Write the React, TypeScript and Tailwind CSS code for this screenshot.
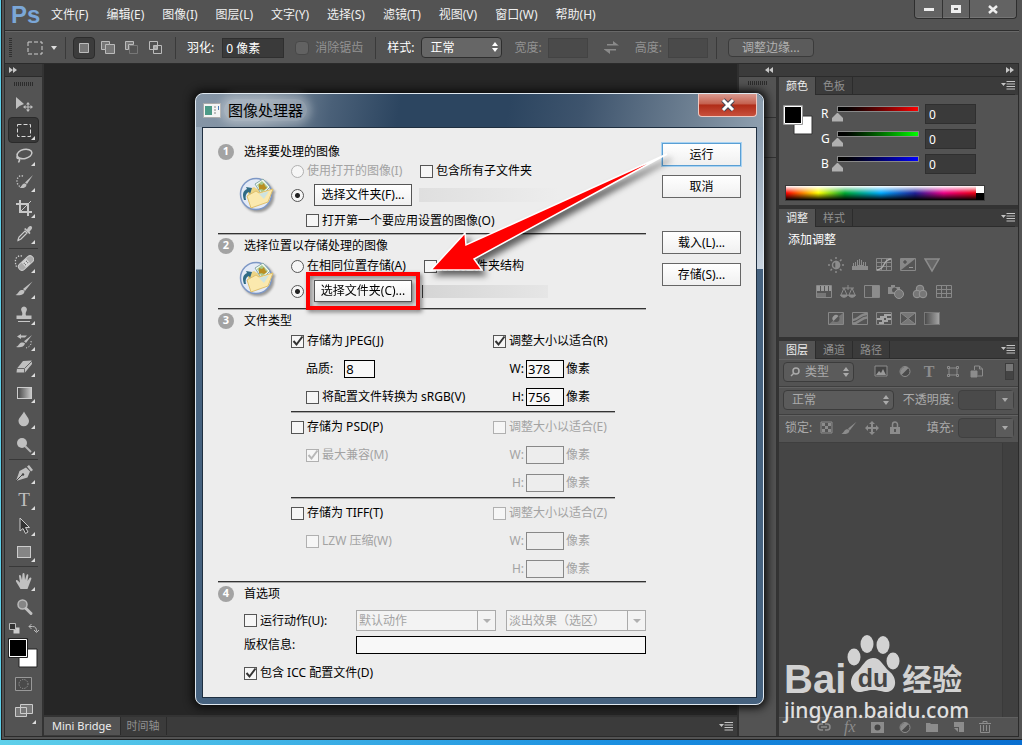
import React from "react";

const cjk = "font-['Noto_Sans','Noto_Sans_CJK_SC',sans-serif]";

const menus = [
  "文件(F)",
  "编辑(E)",
  "图像(I)",
  "图层(L)",
  "文字(Y)",
  "选择(S)",
  "滤镜(T)",
  "视图(V)",
  "窗口(W)",
  "帮助(H)",
];

function UpDown() {
  return (
    <svg width="8" height="12" viewBox="0 0 8 12" fill="currentColor">
      <path d="M4 1 7 5H1zM4 11 1 7h6z" />
    </svg>
  );
}

function DoubleArrow({ left = false }: { left?: boolean }) {
  return (
    <svg width="8" height="6" viewBox="0 0 8 6" fill="#c8c8c8">
      {left ? <path d="M4 0v6L0 3zM8 0v6L4 3z" /> : <path d="M0 0l4 3-4 3zM4 0l4 3-4 3z" />}
    </svg>
  );
}

function PanelMenu() {
  return (
    <button aria-label="面板菜单">
      <svg width="14" height="9" viewBox="0 0 14 9" className="block">
        <path d="M0 2h5L2.500 5z" fill="#c4c4c4" />
        <path d="M5.500.5H14M5.500 3H14M5.500 5.500H14M5.500 8H14" stroke="#c4c4c4" />
      </svg>
    </button>
  );
}

/* ---------- tool box ---------- */

const toolIcons: Record<string, React.ReactNode> = {
  移动: (
    <>
      <path d="M2 3v12l3.500-3L10 10z" />
      <path d="M14 8l2 2.500h-1.500v2h2V11l2.500 2-2.500 2v-1.500h-2v2H16L14 18l-2-2.500h1.500v-2h-2V15L9 13l2.500-2v1.500h2v-2H12z" />
    </>
  ),
  选框: <path d="M3.500 4.500h13v12h-13z" fill="none" stroke="#d8d8d8" strokeDasharray="4 2" />,
  套索: (
    <g fill="none" stroke="#c8c8c8" strokeWidth="1.500">
      <ellipse cx="10.500" cy="8" rx="7.500" ry="4.500" transform="rotate(-12 10.500 8)" />
      <path d="M4 10c-2 1-1 3 1 2.500M5 12.500c1.500 1 0 3-.5 4" />
    </g>
  ),
  快速选择: (
    <>
      <path d="M9 4c-4-1-6 2-6 5s2 6 5 6" fill="none" stroke="#ccc" strokeWidth="1.300" strokeDasharray="1.300 1.500" />
      <path d="M19 3l-6 9-2-1.500z" />
      <path d="M12.500 12.500c0 3-3 4-7 3.500 2-1 2.500-4 4.500-4.500 1 0 2 .3 2.500 1z" />
    </>
  ),
  裁剪: (
    <g fill="none" stroke="#c8c8c8" strokeWidth="2">
      <path d="M6 2v12h12M2 6h12v12" />
      <path d="M7 13 17 3" strokeWidth="1" />
    </g>
  ),
  吸管: (
    <>
      <path d="M4 16l1-3 6-6 2 2-6 6-3 1.500z" fill="#555" stroke="#ccc" strokeWidth="1.200" />
      <path d="M10 5l1.500-1 1.500 1.500C14 3 15.500 1.500 17 2s1.500 2.500 0 4l-1.500 1.500L16.500 9l-1 1.200z" />
    </>
  ),
  修复: (
    <>
      <path d="M8 3C3 2 1 6 1.500 9c0 3 .5 4 1.500 5" fill="none" stroke="#ccc" strokeWidth="1.300" strokeDasharray="1.300 1.500" />
      <g transform="rotate(-42 12 10)">
        <rect x="3" y="6.500" width="18" height="7" rx="3.500" fill="#aaa" stroke="#ccc" />
        <rect x="9" y="7" width="6" height="6" fill="#d8d8d8" />
        <path d="M10 9h1M13 9h1M10 11h1M13 11h1" stroke="#555" />
      </g>
    </>
  ),
  画笔: (
    <>
      <path d="M18.500 2.500 11 12l-2-2z" />
      <path d="M10.500 12c0 4-5 5-9 4 3-1 3-4.500 6-5 1.200-.2 2.500.2 3 1z" />
    </>
  ),
  图章: (
    <>
      <path d="M10 1.500a3 3 0 0 1 2.500 4.500c-1 1.500-1 3-.5 4.500h5.500V14h-15v-3.500H8C8.500 9 8.500 7.500 7.500 6A3 3 0 0 1 10 1.500z" />
      <path d="M4 16.500h12" stroke="#c8c8c8" />
    </>
  ),
  历史: (
    <>
      <path d="M18 4l-6 8-2-1.800zM11 12.500c-1 4-5 4-9 3.500 3-1 3-4 5.500-4.500 1.300-.2 2.800 0 3.500 1z" />
      <path d="M3 5.500 7 3v1.500h6L11 6.500H7V8z" />
      <path d="M17 10c1 4-2 6-5 7" fill="none" stroke="#ccc" strokeDasharray="1.300 1.500" />
    </>
  ),
  橡皮: (
    <>
      <path d="M9 4 17.500 3.500 18 7l-7 8.500H2.500L3 11.500z" />
      <path d="M3 11.500h7.500L18 4M10.500 12v4" stroke="#666" fill="none" />
    </>
  ),
  渐变: <rect x="3.500" y="4.500" width="14" height="11" fill="url(#toolGrad)" stroke="#ccc" />,
  模糊: <path d="M10 2.500c2 4 5 6.500 5 9.500a5 5 0 0 1-10.500 0c0-3 3.500-5.500 5.500-9.500z" />,
  减淡: (
    <>
      <circle cx="8" cy="8" r="5" />
      <path d="M11 11l6 6" stroke="#b4b4b4" strokeWidth="2" />
    </>
  ),
  钢笔: (
    <>
      <path d="M13 4.500 17 8.500l-2.500 6L3 18l3.500-10z" transform="translate(-1 -1)" />
      <path d="M13 2.500 15 1l4 5-2 1.500z" />
      <path d="M2 17l6-6" stroke="#444" />
      <circle cx="9" cy="10.500" r="1.200" fill="#444" />
    </>
  ),
  文字: (
    <text x="10" y="16" textAnchor="middle" fontSize="19" fontFamily="Liberation Serif, serif">
      T
    </text>
  ),
  路径选择: <path d="M6 2v13l3-2.500 2.500 5 2.500-1.500-2.500-4.500h4z" fill="#333" stroke="#ccc" />,
  矩形: <rect x="3.500" y="4.500" width="13" height="11" fill="#858585" stroke="#ccc" />,
  抓手: (
    <path d="M6.500 18 2 10.500c-.5-1.500 1-2 2-.8l2 2L5 5c0-1.500 1.800-1.500 2 0l1 4 .5-6c.2-1.500 2-1.500 2 0l.5 6 1.500-5c.5-1.300 2-1 1.800.5L13.500 10l2-3c1-1.200 2.300-.3 1.800 1L15 14l-1.500 4z" />
  ),
  缩放: (
    <>
      <circle cx="8.500" cy="7.500" r="4.500" fill="#858585" stroke="#bbb" strokeWidth="1.500" />
      <path d="M12 11.500l5 5" stroke="#c0c0c0" strokeWidth="3" strokeLinecap="round" />
    </>
  ),
};

const toolGroups = [
  ["移动", "选框", "套索", "快速选择", "裁剪", "吸管"],
  ["修复", "画笔", "图章", "历史", "橡皮", "渐变", "模糊", "减淡"],
  ["钢笔", "文字", "路径选择", "矩形"],
  ["抓手", "缩放"],
];

function Tool({ name }: { name: string }) {
  const active = name === "选框";
  return (
    <button
      aria-label={name}
      className={`relative flex h-[26px] w-[31px] items-center justify-center rounded-sm border ${
        active ? "border-[#2a2a2a] bg-[#383838]" : "border-transparent"
      }`}
    >
      <svg width="20" height="20" viewBox="0 0 20 20" fill="#c0c0c0">
        {toolIcons[name]}
      </svg>
      {name !== "移动" && name !== "缩放" && (
        <svg width="4" height="4" className="absolute right-[3px] bottom-[2px]" fill="#ddd">
          <path d="M4 0v4H0z" />
        </svg>
      )}
    </button>
  );
}

function Grip() {
  return (
    <svg width="20" height="4">
      <path d="M0 2h20" stroke="#2c2c2c" strokeWidth="4" strokeDasharray="1 1" />
    </svg>
  );
}

function ToolBox() {
  return (
    <aside className="flex w-[39px] shrink-0 flex-col items-center border-r-2 border-[#333] bg-[#535353]">
      <div className="flex h-[13px] w-full items-center border-b border-[#2b2b2b] bg-[#3b3b3b] pl-1">
        <DoubleArrow />
      </div>
      <div className="flex h-[14px] items-center">
        <Grip />
      </div>
      {toolGroups.map((group, i) => (
        <React.Fragment key={i}>
          {i > 0 && <div className="my-px h-px w-[29px] bg-[#383838]" />}
          {group.map((name) => (
            <Tool key={name} name={name} />
          ))}
        </React.Fragment>
      ))}
      <div className="flex h-4 w-[30px] items-center justify-between">
        <svg width="11" height="11">
          <path d="M4.500 4.500h6v6h-6z" fill="#ccc" />
          <path d="M.5.5h6v6h-6z" fill="#333" stroke="#bbb" />
        </svg>
        <svg width="11" height="11" fill="none" stroke="#bbb">
          <path d="M1 3.500h3.500c3 0 4 1.500 4 5M3.500 1 1 3.500 3.500 6M6 7l2.500 2.500L11 7" />
        </svg>
      </div>
      <svg width="31" height="31" className="mt-[2px]">
        <path d="M11 11h18v18H11z" fill="#fff" stroke="#222" />
        <path d="M1.500 1.500h17v17h-17z" stroke="#fff" />
        <path d="M.5.500h19v19H.5z" fill="none" stroke="#222" />
      </svg>
      <button aria-label="快速蒙版" className="mt-[2px] flex h-[26px] items-center">
        <svg width="17" height="14" fill="#4a4a4a" stroke="#999">
          <path d="M.5.500h16v13H.5z" />
          <circle cx="8.500" cy="7" r="4.500" strokeDasharray="1.200 1.200" />
        </svg>
      </button>
      <button aria-label="屏幕模式" className="relative flex h-[28px] w-[31px] items-center justify-center">
        <svg width="18" height="14" fill="#777" stroke="#ccc">
          <path d="M.5 3.500h11v9H.5zM5.500.5h12v9h-12z" />
        </svg>
        <svg width="4" height="4" className="absolute right-[3px] bottom-px" fill="#ddd">
          <path d="M4 0v4H0z" />
        </svg>
      </button>
    </aside>
  );
}

/* ---------- top bars ---------- */

function MenuBar() {
  return (
    <header className="flex h-[31px] items-center border-b border-[#2e2e2e]">
      <span className="w-[46px] pl-[6px] font-['Liberation_Sans'] text-2xl leading-6 font-bold text-[#7ba7d7]">Ps</span>
      <nav className="flex gap-[18px] text-xs text-[#f0f0f0]">
        {menus.map((m) => (
          <button key={m} className="whitespace-nowrap">
            {m}
          </button>
        ))}
      </nav>
      <div className="mr-[2px] ml-auto flex h-[19px] self-start rounded-b border border-t-0 border-[#2e2e2e] bg-[#636363] shadow-[inset_0_-1px_0_#757575]">
        <button aria-label="最小化" className="flex w-7 items-center justify-center border-r border-[#333]">
          <svg width="10" height="3">
            <path d="M0 0h10v3H0z" fill="#eee" />
          </svg>
        </button>
        <button aria-label="最大化" className="flex w-[27px] items-center justify-center border-r border-[#333]">
          <svg width="10" height="8">
            <path d="M1.500 1.500h7v5h-7z" fill="none" stroke="#eee" strokeWidth="3" />
          </svg>
        </button>
        <button aria-label="关闭" className="flex w-[46px] items-center justify-center">
          <svg width="10" height="9">
            <path d="M1 1l8 7M9 1 1 8" stroke="#eee" strokeWidth="2.500" />
          </svg>
        </button>
      </div>
    </header>
  );
}

function Divider() {
  return <div className="h-[22px] w-px bg-[#3a3a3a]" />;
}

function OptionsBar() {
  return (
    <div className="flex h-8 items-center border-t border-[#686868] pl-1 text-xs whitespace-nowrap text-white">
      <svg width="4" height="20">
        <path d="M1.500 0v20" stroke="#303030" strokeWidth="3" strokeDasharray="1 1" />
      </svg>
      <svg width="16" height="14" className="ml-[14px]">
        <path d="M1 1h14v12H1z" fill="none" stroke="#d0d0d0" strokeDasharray="4 2" />
      </svg>
      <svg width="6" height="4" className="mx-2" fill="#ddd">
        <path d="M0 0h6L3 4z" />
      </svg>
      <Divider />
      <div className="ml-[7px] flex items-center gap-[10px]">
        <button aria-label="新选区" className="flex h-[22px] w-[22px] items-center justify-center rounded-sm border border-[#2c2c2c] bg-[#3c3c3c]">
          <svg width="10" height="10">
            <path d="M.5.500h9v9h-9z" fill="#777" stroke="#bbb" />
          </svg>
        </button>
        <button aria-label="添加到选区" className="-ml-1">
          <svg width="14" height="14" stroke="#bbb" fill="#777">
            <path d="M.5.500h8v3h5v9h-9v-4h-4z" />
            <path d="M4.500 8.500v-5h4" fill="none" />
          </svg>
        </button>
        <button aria-label="从选区减去">
          <svg width="14" height="14" stroke="#bbb" fill="none">
            <path d="M4.500 4.500h8v8h-8z" stroke="#777" />
            <path d="M.5.500h8v3h-5v5h-3z" fill="#777" />
          </svg>
        </button>
        <button aria-label="与选区交叉">
          <svg width="14" height="14" stroke="#bbb" fill="none">
            <path d="M.5.500h8v8h-8zM4.500 4.500h8v8h-8z" />
            <path d="M5 5h3v3H5z" fill="#999" />
          </svg>
        </button>
      </div>
      <div className="ml-3">
        <Divider />
      </div>
      <label htmlFor="feather" className="ml-[11px]">
        羽化:
      </label>
      <input id="feather" defaultValue="0 像素" className="ml-2 h-5 w-[62px] border border-[#2f2f2f] bg-[#3a3a3a] px-[3px]" />
      <label className="ml-[11px] flex items-center gap-[6px] text-[#929292]">
        <input type="checkbox" disabled className="h-[14px] w-[14px] appearance-none rounded-sm border border-[#484848] bg-[#626262]" />
        消除锯齿
      </label>
      <div className="mr-[11px] ml-3">
        <Divider />
      </div>
      <label htmlFor="style">样式:</label>
      <span className="relative ml-[7px]">
        <select id="style" className="block h-[21px] w-[81px] appearance-none rounded-sm border border-[#2e2e2e] bg-[#666] pl-2">
          <option>正常</option>
        </select>
        <span className="pointer-events-none absolute top-1 right-[3px]">
          <UpDown />
        </span>
      </span>
      <label htmlFor="width" className="ml-3 text-[#929292]">
        宽度:
      </label>
      <input id="width" disabled className="ml-[6px] h-5 w-10 border border-[#434343] bg-[#4a4a4a]" />
      <svg width="15" height="13" className="mx-4" fill="#8a8a8a">
        <path d="M3 3h6V0l6 4.500H3zM12 9.500H6V13L0 8.500V8h12z" />
      </svg>
      <label htmlFor="height" className="text-[#929292]">
        高度:
      </label>
      <input id="height" disabled className="ml-[6px] h-5 w-10 border border-[#434343] bg-[#4a4a4a]" />
      <div className="mr-[11px] ml-2">
        <Divider />
      </div>
      <button className="h-[19px] w-[86px] rounded-sm border border-[#3b3b3b] bg-[#5b5b5b] leading-4 text-[#b0b0b0]">调整边缘...</button>
    </div>
  );
}

/* ---------- right panels ---------- */

function PanelTabs({ tabs }: { tabs: string[] }) {
  return (
    <div className="flex h-[18px] items-stretch bg-[#3b3b3b] pr-[3px] text-[11px] leading-4">
      {tabs.map((t, i) => (
        <button
          key={t}
          className={`border-r border-[#2c2c2c] px-[7px] whitespace-nowrap ${
            i === 0 ? "bg-[#535353] text-[#eee]" : "border-b text-[#909090]"
          }`}
        >
          {t}
        </button>
      ))}
      <div className="flex flex-1 items-center justify-end border-b border-[#2c2c2c]">
        <PanelMenu />
      </div>
    </div>
  );
}

const channels = [
  { name: "R", bar: "bg-linear-to-r from-black to-[#f00]" },
  { name: "G", bar: "bg-linear-to-r from-black to-[#0f0]" },
  { name: "B", bar: "bg-linear-to-r from-black to-[#00f]" },
];

function ColorPanel() {
  return (
    <section className="border-b-4 border-[#333]">
      <PanelTabs tabs={["颜色", "色板"]} />
      <div className="flex pt-[9px] pl-1">
        <svg width="31" height="31" className="mt-px shrink-0">
          <path d="M11 11h18v18H11z" fill="#fff" stroke="#333" />
          <path d="M1.500 1.500h17v17h-17z" stroke="#fff" />
          <path d="M.5.500h19v19H.5z" fill="none" stroke="#999" />
        </svg>
        <div className="ml-[7px] flex flex-1 flex-col gap-[5px] text-xs text-white">
          {channels.map((c) => (
            <div key={c.name} className="flex h-5 items-center">
              <label htmlFor={`ch-${c.name}`} className="w-[11px] leading-4">
                {c.name}
              </label>
              <div className="flex w-[92px] flex-col">
                <div className={`mx-[5px] h-[6px] border border-[#888] ${c.bar}`} />
                <input
                  id={`ch-${c.name}`}
                  type="range"
                  min={0}
                  max={255}
                  defaultValue={0}
                  className="block h-[10px] w-full appearance-none bg-transparent [&::-webkit-slider-thumb]:h-[9px] [&::-webkit-slider-thumb]:w-[11px] [&::-webkit-slider-thumb]:appearance-none [&::-webkit-slider-thumb]:bg-[#b0b0b0] [&::-webkit-slider-thumb]:[clip-path:polygon(50%_0,100%_60%,100%_100%,0_100%,0_60%)]"
                />
              </div>
              <input aria-label={`${c.name} 值`} defaultValue="0" className="ml-px h-5 w-[51px] border border-[#2f2f2f] bg-[#3a3a3a] px-[3px]" />
            </div>
          ))}
        </div>
      </div>
      <div className="mt-[11px] mb-1 ml-[6px] flex h-4 w-[200px] border border-[#3a3a3a]">
        <div className="flex-1 bg-[linear-gradient(to_bottom,#fff,transparent_50%,#000),linear-gradient(to_right,#f00,#ff0_17%,#0a3_31%,#0af_50%,#229_68%,#e08_83%,#e01)]" />
        <div className="w-2 bg-[linear-gradient(#fff_50%,#000_50%)]" />
      </div>
    </section>
  );
}

const box = <path d="M.5 1.500h15v12H.5z" fill="#555" stroke="#888" />;

const adjustRows: React.ReactNode[][] = [
  [
    <g key="sun" stroke="#8c8c8c" strokeWidth="1.500" fill="none">
      <circle cx="8" cy="8" r="3.500" />
      <path d="M8 4.500a3.500 3.500 0 0 1 0 7z" fill="#8c8c8c" />
      <path d="M8 0v2M8 14v2M0 8h2M14 8h2M2.500 2.500l1.500 1.500M12 12l1.500 1.500M13.500 2.500 12 4M4 12l-1.500 1.500" />
    </g>,
    <path key="levels" d="M0 13V9h1V6h1v3h1V5h1v4h1V3h1v5h1V2h1v6h1V3h1v5h1V5h1v4h1V5h1v4h2v4z" fill="#8c8c8c" />,
    <g key="curves">
      {box}
      <path d="M5.500 2v11M10.500 2v11M1 5.500h14M1 9.500h14" stroke="#888" />
      <path d="M1 13c9-1 5-10 14-11" stroke="#aaa" fill="none" strokeWidth="1.500" />
    </g>,
    <g key="exposure">
      {box}
      <path d="M1 13V2h14z" fill="#888" />
      <path d="M3 5h4M5 3v4" stroke="#444" />
      <path d="M9 10.500h4" stroke="#999" />
    </g>,
    <path key="vibrance" d="M1 2h14L8 14z" fill="#666" stroke="#8c8c8c" strokeWidth="1.500" />,
  ],
  [
    <g key="hue">
      {box}
      <path d="M1 4.500h14" stroke="#999" strokeWidth="5" strokeDasharray="3 1" />
      <path d="M1 9h9v4H1z" fill="#777" />
    </g>,
    <g key="balance" stroke="#8c8c8c" fill="none">
      <path d="M2 4h12M8 1v5M4 4 1 11M4 4l3 7M12 4 9 11M12 4l3 7" />
      <path d="M.5 11h7c-1 3-6 3-7 0zM8.500 11h7c-1 3-6 3-7 0z" fill="#8c8c8c" />
    </g>,
    <g key="bw">
      {box}
      <path d="M8 2h7v11H8z" fill="#8c8c8c" />
    </g>,
    <g key="photo">
      <path d="M0 3h3V1h4v2h5v7H0z" fill="#8c8c8c" />
      <circle cx="6.500" cy="6" r="2.500" fill="#555" />
      <circle cx="11" cy="10" r="4.500" fill="#777" stroke="#999" />
    </g>,
    <g key="mixer" stroke="#999" fill="#777">
      <circle cx="8" cy="5" r="3.800" />
      <circle cx="5" cy="10" r="3.800" />
      <circle cx="11" cy="10" r="3.800" />
    </g>,
    <g key="lookup">
      {box}
      <path d="M5.500 2v11M10.500 2v11M1 5.500h14M1 9.500h14" stroke="#888" />
    </g>,
  ],
  [
    <g key="invert">
      {box}
      <path d="M1 13 15 2v11z" fill="#777" />
      <circle cx="8" cy="7.500" r="3.500" fill="#555" />
      <path d="M5.500 10a3.500 3.500 0 0 1 5-5z" fill="#999" />
    </g>,
    <g key="posterize">
      {box}
      <path d="M1 9C6 9 8 3 15 3M1 12.500c6 0 8-6 14-6" stroke="#888" strokeWidth="2.500" fill="none" />
    </g>,
    <g key="threshold">
      {box}
      <path d="M1 7h3V5h4V3h7v2h-4v2H8v2H1zM3 11h3V9h4V7h5v2h-3v2H8v2H3z" fill="#a5a5a5" />
    </g>,
    <g key="selective">
      {box}
      <path d="M1 2l7 5.500L15 2M1 13l7-5.500 7 5.500" stroke="#888" fill="#777" />
    </g>,
    <rect key="map" x=".5" y="1.500" width="15" height="12" fill="url(#toolGrad)" stroke="#888" opacity=".7" />,
  ],
];

function AdjustPanel() {
  return (
    <section className="border-b-4 border-[#333]">
      <PanelTabs tabs={["调整", "样式"]} />
      <h2 className="pt-[3px] pl-[9px] text-xs leading-5 text-white">添加调整</h2>
      <div className="flex w-[210px] flex-col gap-[11px] pt-[7px] pb-[10px]">
        {adjustRows.map((row, i) => (
          <div key={i} className="flex justify-center gap-2">
            {row.map((icon, j) => (
              <button key={j} aria-label={`调整 ${i + 1}-${j + 1}`}>
                <svg width="16" height="16" viewBox="0 0 16 16" className="block">
                  {icon}
                </svg>
              </button>
            ))}
          </div>
        ))}
      </div>
    </section>
  );
}

function PercentBox({ id }: { id: string }) {
  return (
    <span className="flex h-5 w-14 rounded-sm border border-[#404040] bg-[#4a4a4a]">
      <input id={id} disabled className="w-9" />
      <button aria-label="展开" className="flex flex-1 items-center justify-center border-l border-[#404040] bg-[#5b5b5b]">
        <svg width="6" height="4" fill="#aaa">
          <path d="M0 0h6L3 4z" />
        </svg>
      </button>
    </span>
  );
}

function HalfCircle() {
  return (
    <svg width="14" height="13">
      <circle cx="7" cy="6.500" r="5" fill="#4a4a4a" stroke="#8c8c8c" />
      <path d="M3.500 10A5 5 0 0 1 10.500 3z" fill="#8c8c8c" />
    </svg>
  );
}

function LayerPanel() {
  const row = "flex h-7 items-center border-b border-[#3f3f3f] pr-1 pb-[2px] pl-1 shadow-[inset_0_1px_0_#626262]";
  return (
    <section className="flex flex-1 flex-col text-xs text-[#aaa]">
      <PanelTabs tabs={["图层", "通道", "路径"]} />
      <div className={row}>
        <span className="relative flex items-center">
          <svg width="10" height="10" className="absolute left-[7px]" fill="none" stroke="#aaa" strokeWidth="1.500">
            <circle cx="6" cy="4" r="3" />
            <path d="M4 6 1 9" />
          </svg>
          <select aria-label="筛选" className="h-5 w-[71px] appearance-none rounded-sm border border-[#3c3c3c] bg-[#5b5b5b] pl-[21px]">
            <option>类型</option>
          </select>
          <span className="pointer-events-none absolute right-1">
            <UpDown />
          </span>
        </span>
        <div className="ml-5 flex flex-1 items-center gap-[10px]">
          <svg width="14" height="13">
            <path d="M1 1h12v10H1z" fill="#444" stroke="#8c8c8c" />
            <path d="M2 10l3-4 2 2 2-4 3 6z" fill="#999" />
          </svg>
          <HalfCircle />
          <span className="w-[14px] text-center font-['Liberation_Serif'] text-base leading-4 font-bold text-[#8c8c8c]">T</span>
          <svg width="14" height="13" fill="#555" stroke="#8c8c8c">
            <path d="M3 3h8v7H3zM1.500 1.500h2v2h-2zM10.500 1.500h2v2h-2zM1.500 9.500h2v2h-2zM10.500 9.500h2v2h-2z" />
          </svg>
          <svg width="14" height="13" stroke="#8c8c8c" fill="none">
            <path d="M4.500 5V1h5l3 3v7h-5M9.500 1v3h3" />
            <path d="M1 6h6v6H1z" fill="#8c8c8c" />
          </svg>
        </div>
        <button aria-label="筛选开关" className="flex h-[17px] w-[9px] flex-col border border-[#3c3c3c] bg-[#444]">
          <span className="h-[7px] w-full bg-[#777]" />
        </button>
      </div>
      <div className={row}>
        <span className="relative flex items-center">
          <select aria-label="混合模式" className="h-5 w-[111px] appearance-none rounded-sm border border-[#3c3c3c] bg-[#5b5b5b] pl-2">
            <option>正常</option>
          </select>
          <span className="pointer-events-none absolute right-1">
            <UpDown />
          </span>
        </span>
        <label htmlFor="opacity" className="mr-1 ml-auto">
          不透明度:
        </label>
        <PercentBox id="opacity" />
      </div>
      <div className={row}>
        <span className="ml-[2px]">锁定:</span>
        <div className="ml-2 flex flex-1 items-center gap-2">
          <svg width="13" height="13">
            <path d="M1 1h11v11H1z" fill="#555" stroke="#8c8c8c" />
            <path d="M2 2h3v3H2zM8 2h3v3H8zM5 5h3v3H5zM2 8h3v3H2zM8 8h3v3H8z" fill="#8c8c8c" />
          </svg>
          <svg width="16" height="14" viewBox="1 2 18 15" fill="#8c8c8c">
            {toolIcons["画笔"]}
          </svg>
          <svg width="14" height="14" fill="#8c8c8c">
            <path d="M7 0l3 3H8v3h3V4l3 3-3 3V8H8v3h2l-3 3-3-3h2V8H3v2L0 7l3-3v2h3V3H4z" />
          </svg>
          <svg width="16" height="13" fill="#8c8c8c">
            <path d="M3 6h10v7H3z" />
            <path d="M5.500 6V3.500a2.500 2.500 0 0 1 5 0V6" fill="none" stroke="#8c8c8c" strokeWidth="1.500" />
            <path d="M8 8v3" stroke="#444" strokeWidth="1.500" />
          </svg>
        </div>
        <label htmlFor="fill" className="mr-1">
          填充:
        </label>
        <PercentBox id="fill" />
      </div>
      <div className="flex flex-1 justify-end bg-[#454545]">
        <div className="w-4 border-l border-[#3a3a3a] bg-[#404040]" />
      </div>
      <div className="flex h-[19px] items-center justify-end gap-[13px] border-t border-[#606060] pr-[27px] text-[#8c8c8c]">
        <svg width="14" height="8" fill="none" stroke="currentColor" strokeWidth="1.500">
          <path d="M6 1H4a3 3 0 0 0 0 6h2M8 1h2a3 3 0 0 1 0 6H8M4 4h6" />
        </svg>
        <em className="w-[14px] font-['Liberation_Serif'] text-base leading-4">fx</em>
        <svg width="14" height="11">
          <path d="M0 0h13v11H0z" fill="currentColor" />
          <circle cx="6.500" cy="5.500" r="3" fill="#444" />
        </svg>
        <HalfCircle />
        <svg width="14" height="11" fill="currentColor">
          <path d="M1 1h4l1 1h7v8H1z" />
        </svg>
        <svg width="14" height="11" fill="currentColor">
          <path d="M2 0h10v10H7V5H2z" />
          <path d="M2 6h4v4z" />
        </svg>
        <svg width="12" height="12" fill="none" stroke="currentColor">
          <path d="M0 2.500h12M4 2V.5h4V2M1.500 4v7.500h9V4M4.500 4v6M7.500 4v6" />
        </svg>
      </div>
    </section>
  );
}

/* ---------- image processor dialog ---------- */

interface CheckProps {
  label: string;
  type?: "checkbox" | "radio";
  name?: string;
  checked?: boolean;
  disabled?: boolean;
  className?: string;
}

function Check({ label, type = "checkbox", name, checked, disabled, className = "" }: CheckProps) {
  return (
    <label className={`flex items-center gap-[3px] whitespace-nowrap ${disabled ? "text-[#a3a3a3]" : ""} ${className}`}>
      <span className="relative flex">
        <input
          type={type}
          name={name}
          defaultChecked={checked}
          disabled={disabled}
          aria-label={label || "选择文件夹"}
          className={`peer h-[13px] w-[13px] appearance-none border border-[#555] bg-[#f6f6f6] disabled:border-[#b0b0b0] ${
            type === "radio" ? "rounded-full checked:bg-[radial-gradient(circle,#222_0_2px,#f6f6f6_3px)]" : ""
          }`}
        />
        {type === "checkbox" && (
          <svg
            viewBox="0 0 13 13"
            className="pointer-events-none absolute inset-0 hidden h-[13px] w-[13px] peer-checked:block"
            fill="none"
            stroke={disabled ? "#b8b8b8" : "#333"}
            strokeWidth="2"
          >
            <path d="M2.500 6 5.500 9.500 11.500 1.500" />
          </svg>
        )}
      </span>
      {label}
    </label>
  );
}

function DialogButton({ children, focused }: { children: React.ReactNode; focused?: boolean }) {
  return (
    <button
      className={`h-[23px] border bg-linear-to-b from-white to-[#f0f0f0] leading-5 ${
        focused ? "border-[#5a9fd4] ring-1 ring-[#a9d3f2]" : "border-[#666]"
      }`}
    >
      {children}
    </button>
  );
}

function StepTitle({ n, children }: { n: number; children: React.ReactNode }) {
  return (
    <h3 className="flex h-[21px] items-center gap-[10px]">
      <span className="flex h-4 w-4 items-center justify-center rounded-full bg-[#a3a3a3] font-['Open_Sans'] text-[11px] font-bold text-white">
        {n}
      </span>
      {children}
    </h3>
  );
}

function FolderIcon() {
  return (
    <svg width="38" height="36" viewBox="0 0 38 36" className="mr-[14px] mb-2 ml-[21px] self-center drop-shadow-[2px_2px_1px_#999]">
      <circle cx="17" cy="18" r="15.500" fill="#e3eaf6" stroke="#7d97c5" strokeWidth="1.500" />
      <path d="M8 14l7-3 3 2 10-3 2 11-18 7z" fill="#ecd486" />
      <path d="M16 8 24 3l7 8-8 8z" fill="#f4f8f0" stroke="#8aa" />
      <path d="M18 9l5-4 6 6-6 6z" fill="#a9c98c" />
      <path d="M20 8l3 1 2-2 1 3 2 2-3 2-3-1-2 1v-3z" fill="#b98e22" />
      <path d="M8 20l9-5 3 2 14-4-5 13-17 6z" fill="#fbe9ae" stroke="#dfc06c" />
      <path d="M20 18l5 5 5-8z" fill="#c3e2ee" opacity=".8" />
      <path d="M5 24c-2-6-1-9 3-11l-1-2 6 1-2 6-1-2c-3 1-4 4-3 8z" fill="#2f6a84" />
    </svg>
  );
}

function Rule() {
  return <div className="h-[2px] border-t border-[#333] bg-[#aaa]" />;
}

interface FormatProps {
  title: string;
  resize: string;
  on?: boolean;
  w?: string;
  h?: string;
  middle: React.ReactNode;
  last?: React.ReactNode;
  className: string;
}

function SizeField({ label, id, value, on }: { label: string; id: string; value?: string; on?: boolean }) {
  return (
    <div className={`flex h-5 items-center ${on ? "" : "text-[#a3a3a3]"}`}>
      <label htmlFor={id} className="w-[33px] pr-[2px] text-right">
        {label}
      </label>
      <input
        id={id}
        defaultValue={value}
        disabled={!on}
        className={`mr-[2px] h-[18px] w-[38px] border px-px text-[13px] leading-4 ${on ? "border-black bg-[#f8f8f8]" : "border-[#888]"}`}
      />
      像素
    </div>
  );
}

function Format({ title, resize, on, w, h, middle, last, className }: FormatProps) {
  return (
    <div className={`grid grid-cols-[202px_1fr] gap-y-2 ${className}`}>
      <Check label={title} checked={on} className="h-5" />
      <Check label={resize} checked={on} disabled={!on} className="h-5" />
      <div className="flex h-5 items-center pl-[15px]">{middle}</div>
      <SizeField label="W:" id={`w-${resize}`} value={w} on={on} />
      <div className="flex h-5 items-center pl-[15px]">{last}</div>
      <SizeField label="H:" id={`h-${resize}`} value={h} on={on} />
    </div>
  );
}

function FakeSelect({ label, value }: { label: string; value: string }) {
  return (
    <span className="relative flex w-[140px]">
      <select aria-label={label} disabled className="h-[21px] w-full appearance-none border border-[#aaa] bg-[#f3f3f3] pl-[2px] text-[#a3a3a3] opacity-100">
        <option>{value}</option>
      </select>
      <span className="pointer-events-none absolute top-0 right-0 flex h-[21px] w-[19px] items-center justify-center border border-[#aaa]">
        <svg width="8" height="4" fill="#b0b0b0">
          <path d="M0 0h8L4 4z" />
        </svg>
      </span>
    </span>
  );
}

function ProcessorDialog() {
  return (
    <div
      role="dialog"
      aria-label="图像处理器"
      className="absolute top-[93px] left-[195px] w-[569px] rounded-lg border border-[#dfe8f0] bg-[linear-gradient(#8fa0b2_0,#9fb0c0_60px,#c4d0dc_175px,transparent_176px),linear-gradient(#46627f,#46627f)] bg-[length:8px_100%,100%_100%] bg-[position:0_0,0_0] bg-no-repeat px-[6px] pb-[6px] text-black shadow-[0_0_8px_3px_#0c0c0c]"
    >
      <div className="absolute inset-x-0 top-0 h-[33px] rounded-t-lg bg-[linear-gradient(100deg,#8595a6_0,#8090a0_12%,#4a6078_24%,#2c4560_36%,#2c4560_55%,#3e546d_68%,#708294_88%,#8fa0b0)]" />
      <div className="absolute top-[33px] right-0 h-[142px] w-[6px] bg-linear-to-b from-[#8b9db0] to-[#c9d4e0]" />
      <div className="relative flex h-[33px] items-start">
        <svg width="18" height="15" className="mt-[9px] ml-px">
          <path d="M.5.500h17v14H.5z" fill="#f4f4f4" stroke="#aaa" />
          <path d="M2 3h7v9H2z" fill="#4c9a87" />
          <path d="M11 4h2M11 7h2M11 10h2" stroke="#bbb" strokeWidth="2" />
          <path d="M15 3h1v4h-1z" fill="#356db5" />
        </svg>
        <h1 className="mt-[5px] ml-[3px] rounded-full bg-white/30 px-1 text-[15px] leading-[22px] shadow-[0_0_8px_4px_rgba(255,255,255,0.3)]">图像处理器</h1>
        <button
          aria-label="关闭"
          className="ml-auto flex h-[23px] w-[59px] items-center justify-center rounded-b border border-t-0 border-[#f0c8c0] bg-[linear-gradient(#d99a90,#c4604e_45%,#b02c18_50%,#c8503c)]"
        >
          <svg width="16" height="14">
            <path d="M3 2l10 10M13 2 3 12" stroke="#445" strokeWidth="5" />
            <path d="M3 2l10 10M13 2 3 12" stroke="#fff" strokeWidth="3" />
          </svg>
        </button>
      </div>
      <div className="relative flex border border-[#1f2f40] bg-[#ededed] px-[15px] pt-[13px] pb-[10px] text-xs">
        <div className="mr-4 flex-1">
          <StepTitle n={1}>选择要处理的图像</StepTitle>
          <div className="flex">
            <FolderIcon />
            <div className="flex-1 pb-[2px]">
              <div className="flex h-[18px] items-center">
                <Check type="radio" name="src" label="使用打开的图像(I)" disabled className="w-[129px]" />
                <Check label="包含所有子文件夹" />
              </div>
              <div className="flex h-[30px] items-center">
                <Check type="radio" name="src" label="" checked className="w-[23px]" />
                <button className="h-[22px] w-[98px] border border-[#555] bg-linear-to-b from-white to-[#f0f0f0] leading-5">选择文件夹(F)...</button>
                <div className="ml-[7px] h-[14px] w-[140px] bg-linear-to-r from-[#dfdfdf] to-[#ededed]" />
              </div>
              <div className="flex h-[21px] items-center pl-[15px]">
                <Check label="打开第一个要应用设置的图像(O)" />
              </div>
            </div>
          </div>
          <Rule />
          <StepTitle n={2}>选择位置以存储处理的图像</StepTitle>
          <div className="flex">
            <FolderIcon />
            <div className="flex-1 pb-[2px]">
              <div className="flex h-5 items-center">
                <Check type="radio" name="dst" label="在相同位置存储(A)" className="w-[133px]" />
                <Check label="保持文件夹结构" />
              </div>
              <div className="flex h-[30px] items-center">
                <Check type="radio" name="dst" label="" checked className="w-[23px]" />
                <button className="h-[22px] w-[98px] border border-[#555] bg-linear-to-b from-white to-[#f0f0f0] leading-5 outline-4 outline-offset-4 outline-[#f00] drop-shadow-[2px_2px_2px_#777]">
                  选择文件夹(C)...
                </button>
                <div className="ml-[10px] h-[13px] w-[126px] border-l border-black bg-linear-to-r from-[#d5d5d5] to-[#e6e6e6]" />
              </div>
            </div>
          </div>
          <Rule />
          <StepTitle n={3}>文件类型</StepTitle>
          <div className="mr-[31px] ml-[73px]">
            <Format
              className="pb-1"
              title="存储为 JPEG(J)"
              resize="调整大小以适合(R)"
              on
              w="378"
              h="756"
              middle={
                <>
                  <label htmlFor="quality">品质:</label>
                  <input id="quality" defaultValue="8" className="ml-[11px] h-[18px] w-[31px] border border-black bg-[#f8f8f8] px-px text-[13px] leading-4" />
                </>
              }
              last={<Check label="将配置文件转换为 sRGB(V)" />}
            />
            <Rule />
            <Format className="py-1" title="存储为 PSD(P)" resize="调整大小以适合(E)" middle={<Check label="最大兼容(M)" checked disabled />} />
            <Rule />
            <Format className="pt-1 pb-[2px]" title="存储为 TIFF(T)" resize="调整大小以适合(Z)" middle={<Check label="LZW 压缩(W)" disabled />} />
          </div>
          <Rule />
          <StepTitle n={4}>首选项</StepTitle>
          <div className="grid grid-cols-[112px_150px_140px] gap-y-1 pt-[6px] pl-[26px]">
            <Check label="运行动作(U):" />
            <FakeSelect label="动作组" value="默认动作" />
            <FakeSelect label="动作" value="淡出效果（选区）" />
            <label htmlFor="copyright" className="leading-5">
              版权信息:
            </label>
            <input id="copyright" className="col-span-2 h-[18px] self-center border border-black bg-[#f8f8f8]" />
            <Check label="包含 ICC 配置文件(D)" checked className="col-span-3 h-7" />
          </div>
        </div>
        <div className="flex w-20 flex-col gap-[9px] pt-[2px]">
          <DialogButton focused>运行</DialogButton>
          <DialogButton>取消</DialogButton>
          <div className="h-[15px]" />
          <DialogButton>载入(L)...</DialogButton>
          <DialogButton>存储(S)...</DialogButton>
        </div>
      </div>
      {/* callout arrow from 运行 to the output folder button */}
      <svg width="250" height="130" viewBox="0 0 250 130" className="pointer-events-none absolute top-[54px] left-[229px] drop-shadow-[4px_5px_3px_rgba(0,0,0,0.6)]">
        <path d="M6 122 40 85l1 12L242 6 49 111l8 11z" fill="#f00" stroke="#fff" strokeWidth="1.500" />
      </svg>
    </div>
  );
}

function Watermark() {
  return (
    <div className="absolute bottom-[23px] left-[784px] text-[#d2d2d2]">
      <div className="mb-1 flex items-end">
        <span className="font-['Liberation_Sans'] text-[40px] leading-[30px] font-bold">Bai</span>
        <svg width="54" height="60" viewBox="0 0 54 60" fill="currentColor">
          <ellipse cx="8" cy="23" rx="6.500" ry="8.500" />
          <ellipse cx="21" cy="10" rx="6.500" ry="9" />
          <ellipse cx="37" cy="11" rx="6.500" ry="9" />
          <ellipse cx="47" cy="27" rx="6.500" ry="8.500" />
          <path d="M27 24c8 0 10 8 16 13 9 7 8 20-2 21-5 0-8-2-14-2s-9 2-14 2C4 57 2 45 10 38c7-5 9-14 17-14z" />
          <text x="27" y="53" textAnchor="middle" fontSize="25" fontWeight="bold" fontFamily="Liberation Sans" fill="#454545">
            du
          </text>
        </svg>
        <span className="ml-[2px] text-[30px] leading-[30px] font-bold">经验</span>
      </div>
      <div className="font-['Noto_Sans'] text-[21px] leading-6 font-medium text-[#e0e0e0]">jingyan.baidu.com</div>
    </div>
  );
}

export default function App() {
  return (
    <div className={`relative flex min-h-screen flex-col overflow-hidden bg-[linear-gradient(to_right,#5fd0ea,#1b8fe0_60%,#0a6fd0)] pb-[5px] pl-px text-xs ${cjk}`}>
      <svg width="0" height="0" className="absolute">
        <defs>
          <linearGradient id="toolGrad">
            <stop offset="0" stopColor="#444" />
            <stop offset="1" stopColor="#ccc" />
          </linearGradient>
        </defs>
      </svg>
      <div className="flex flex-1 flex-col border-b border-l border-[#222] bg-[#535353] pr-[3px] pb-[2px] pl-[2px]">
        <div className="flex flex-1 flex-col border-b border-l border-[#2b2b2b]">
          <MenuBar />
          <OptionsBar />
          <div className="flex flex-1 border-t border-r border-[#2b2b2b]">
            <ToolBox />
            <main className="flex min-w-0 flex-1 flex-col bg-[#262626]">
              <div className="flex-1" />
              <div className="flex h-[21px] border-t-2 border-[#333] bg-[#3b3b3b] pr-1 pb-px text-[11px]">
                <button className="bg-[#535353] px-2 text-[#eee]">Mini Bridge</button>
                <button className="border-x border-[#2b2b2b] px-[6px] text-[#909090]">时间轴</button>
                <div className="flex flex-1 items-center justify-end">
                  <PanelMenu />
                </div>
              </div>
            </main>
            <div className="flex w-[281px] shrink-0 flex-col border-l-2 border-[#2f2f2f] bg-[#535353]">
              <div className="flex h-[13px] items-center justify-between border-b border-[#2b2b2b] bg-[#3b3b3b] pr-1 pl-[26px]">
                <DoubleArrow left />
                <DoubleArrow />
              </div>
              <div className="flex flex-1">
                <div className="flex w-[40px] flex-col items-center border-r-3 border-[#333]">
                  <div className="flex h-10 items-start pt-1">
                    <Grip />
                  </div>
                  <div className="h-[41px] w-full border-y border-[#333]" />
                </div>
                <div className="flex min-w-0 flex-1 flex-col">
                  <ColorPanel />
                  <AdjustPanel />
                  <LayerPanel />
                </div>
              </div>
            </div>
          </div>
        </div>
      </div>
      <ProcessorDialog />
      <Watermark />
    </div>
  );
}
